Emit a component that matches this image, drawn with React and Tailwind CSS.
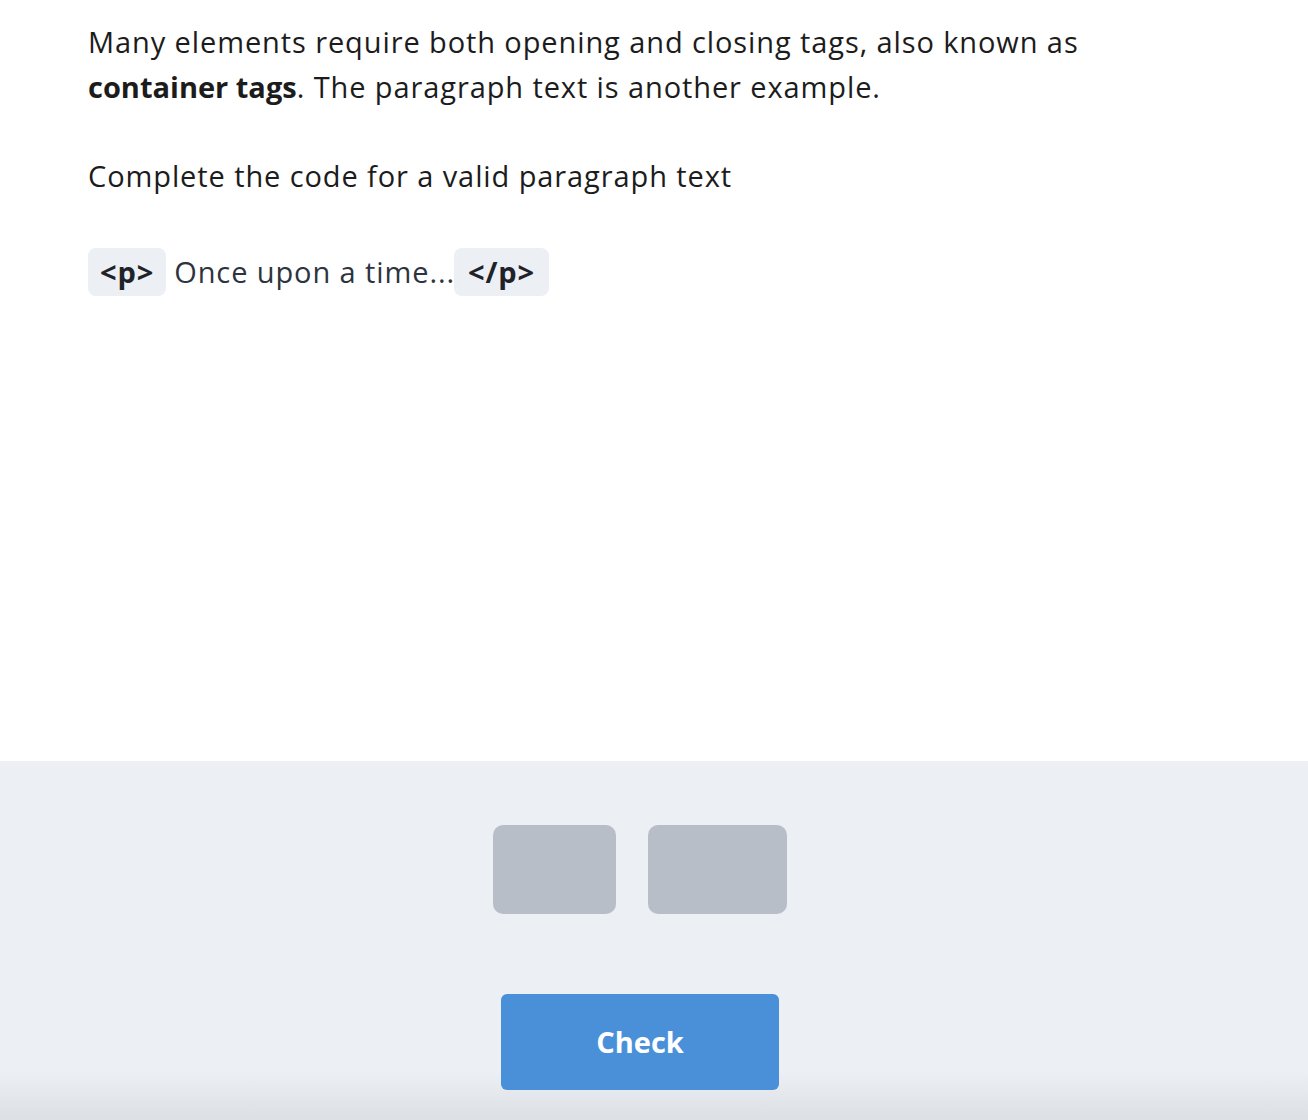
const App = () => {
  return (
    <div
      className="w-[1308px] h-[1120px] flex flex-col bg-white overflow-hidden"
      style={{ fontFamily: '"Open Sans", "Noto Sans", sans-serif' }}
    >
      <div className="h-[761px] px-[88px] pt-[19px] tracking-[0.9px]">
        <p className="w-[1020px] text-[29px] leading-[45px] text-[#1c1c1c]">
          Many elements require both opening and closing tags, also known as{" "}
          <strong className="font-bold tracking-[0px]">container tags</strong>. The paragraph
          text is another example.
        </p>
        <p className="mt-[44px] text-[29px] leading-[45px] text-[#1c1c1c]">
          Complete the code for a valid paragraph text
        </p>
        <div className="mt-[50px] flex items-center text-[29px] text-[#2d3440]">
          <span className="h-[48px] px-[12px] flex items-center rounded-[8px] bg-[#eceff4] font-bold text-[#1f2329]">
            &lt;p&gt;
          </span>
          <span className="ml-[8px] mr-[-1px]">Once upon a time...</span>
          <span className="h-[48px] px-[14px] flex items-center rounded-[8px] bg-[#eceff4] font-bold text-[#1f2329]">
            &lt;/p&gt;
          </span>
        </div>
      </div>

      <div className="flex-1 flex flex-col items-center pr-[28px] bg-[linear-gradient(to_bottom,#eceff4_0,#eceff4_310px,#dcdfe3_359px)]">
        <div className="mt-[64px] flex gap-[32px]">
          <div className="w-[123px] h-[89px] rounded-[10px] bg-[#b8bec8]" />
          <div className="w-[139px] h-[89px] rounded-[10px] bg-[#b8bec8]" />
        </div>
        <button className="mt-[80px] w-[278px] h-[96px] rounded-[6px] bg-[#4a90d9] text-white text-[29px] font-bold">
          Check
        </button>
      </div>
    </div>
  );
};

export default App;
